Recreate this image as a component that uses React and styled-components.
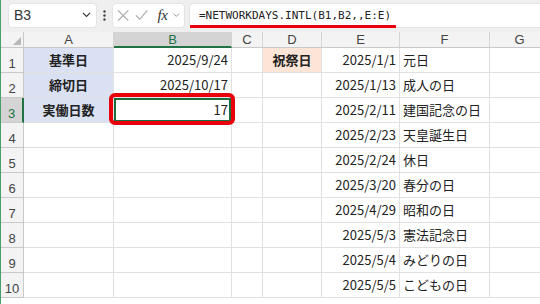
import React from "react";
import styled, { createGlobalStyle, css } from "styled-components";

const GlobalStyle = createGlobalStyle`
  html, body { margin: 0; padding: 0; background: #ffffff; }
  body { font-family: "Noto Sans CJK JP", "Noto Sans", sans-serif; overflow: hidden; }
  * { box-sizing: border-box; }
`;

const Page = styled.div`
  width: 540px;
  height: 304px;
  overflow: hidden;
  border-left: 1px solid #4a9e6b;
  background: #ffffff;
  display: flex;
  flex-direction: column;
`;

const Toolbar = styled.div`
  height: 32px;
  flex: none;
  background: #efefef;
  display: flex;
  align-items: center;
  padding: 0 0 2px 7px;
`;

const Box = styled.div`
  height: 25px;
  background: #ffffff;
  border: 1px solid #e3e3e3;
  border-radius: 4px;
  display: flex;
  align-items: center;
`;

const NameBox = styled(Box)`
  width: 89px;
  padding: 0 5px 0 5px;
  justify-content: space-between;
  font-family: "Liberation Sans", Arial, sans-serif;
  font-size: 14px;
  color: #333;
`;

const Dots = styled.div`
  width: 15px;
  display: flex;
  justify-content: center;
  align-items: center;
`;

const ButtonBox = styled(Box)`
  width: 73px;
  padding: 0 4px 0 4px;
  gap: 6px;
`;

const Fx = styled.span`
  font-family: "Liberation Serif", "Times New Roman", serif;
  font-style: italic;
  font-size: 15px;
  color: #333;
  margin-left: 3px;
  letter-spacing: -0.5px;
`;

const FormulaBox = styled(Box)`
  flex: 1;
  margin-left: 4px;
  border-right: none;
  border-radius: 4px 0 0 4px;
  position: relative;
  padding-left: 9px;
  font-family: "DejaVu Sans Mono", "Liberation Mono", monospace;
  font-size: 11px;
  color: #222;
`;

const Underline = styled.span`
  position: absolute;
  left: 0;
  top: 21px;
  width: 206px;
  height: 3px;
  background: #e8000b;
`;

const Grid = styled.div`
  display: grid;
  grid-template-columns: 23px 90px 118px 31px 59px 78px 90px 60px;
  grid-template-rows: 16px repeat(10, 25px) 10px;
`;

const Corner = styled.div`
  background: #f3f3f3;
  border-right: 1px solid #c9c9c9;
  border-bottom: 1px solid #c9c9c9;
  display: flex;
  align-items: flex-end;
  justify-content: flex-end;
  padding: 0 2px 2px 0;
`;

const ColHeader = styled.div`
  background: ${(p) => (p.$selected ? "#d4d4d4" : "#f3f3f3")};
  color: ${(p) => (p.$selected ? "#217346" : "#444")};
  border-right: 1px solid #d5d5d5;
  border-bottom: ${(p) => (p.$selected ? "2px solid #217346" : "1px solid #c9c9c9")};
  font-family: "Liberation Sans", Arial, sans-serif;
  font-size: 13px;
  line-height: 15px;
  text-align: center;
`;

const RowHeader = styled.div`
  background: ${(p) => (p.$selected ? "#d4d4d4" : "#f3f3f3")};
  color: ${(p) => (p.$selected ? "#217346" : "#444")};
  border-right: ${(p) => (p.$selected ? "2px solid #217346" : "1px solid #c9c9c9")};
  border-bottom: 1px solid #c9c9c9;
  font-family: "Liberation Sans", Arial, sans-serif;
  font-size: 13px;
  display: flex;
  align-items: flex-end;
  justify-content: center;
  padding-bottom: 1px;
`;

const Cell = styled.div`
  border-right: 1px solid #e1e1e1;
  border-bottom: 1px solid #e1e1e1;
  background: ${(p) => p.$bg || "#ffffff"};
  font-size: 13px;
  color: #222;
  font-weight: ${(p) => (p.$bold ? 700 : 400)};
  display: flex;
  align-items: center;
  white-space: nowrap;
  padding: 0 3px 1px 3px;
  justify-content: ${(p) =>
    p.$align === "right" ? "flex-end" : p.$align === "center" ? "center" : "flex-start"};
  ${(p) =>
    p.$active &&
    css`
      position: relative;
      z-index: 2;
      box-shadow: inset 0 0 0 2px #1e6b3f;
      &::after {
        content: "";
        position: absolute;
        top: -5px;
        left: -5px;
        right: -4px;
        bottom: -3px;
        border: 4px solid #e8000b;
        border-radius: 6px;
      }
    `}
`;

const Chevron = ({ color = "#333", size = 9 }) => (
  <svg width={size} height={size * 0.6} viewBox="0 0 10 6">
    <path d="M1 1 L5 5 L9 1" fill="none" stroke={color} strokeWidth="1.3" />
  </svg>
);

const cols = ["A", "B", "C", "D", "E", "F", "G"];

const holidays = [
  ["2025/1/1", "元日"],
  ["2025/1/13", "成人の日"],
  ["2025/2/11", "建国記念の日"],
  ["2025/2/23", "天皇誕生日"],
  ["2025/2/24", "休日"],
  ["2025/3/20", "春分の日"],
  ["2025/4/29", "昭和の日"],
  ["2025/5/3", "憲法記念日"],
  ["2025/5/4", "みどりの日"],
  ["2025/5/5", "こどもの日"],
];

const aCol = ["基準日", "締切日", "実働日数"];
const bCol = ["2025/9/24", "2025/10/17", "17"];

export default function App() {
  const rows = [];
  for (let r = 0; r < 10; r++) {
    rows.push(
      <React.Fragment key={r}>
        <RowHeader $selected={r === 2}>{r + 1}</RowHeader>
        <Cell $align="center" $bold $bg={r < 3 ? "#d9e1f2" : undefined}>
          {aCol[r] || ""}
        </Cell>
        <Cell $align="right" $active={r === 2}>
          {bCol[r] || ""}
        </Cell>
        <Cell />
        <Cell $align="center" $bold $bg={r === 0 ? "#fce4d6" : undefined}>
          {r === 0 ? "祝祭日" : ""}
        </Cell>
        <Cell $align="right">{holidays[r][0]}</Cell>
        <Cell>{holidays[r][1]}</Cell>
        <Cell />
      </React.Fragment>
    );
  }
  return (
    <>
      <GlobalStyle />
      <Page>
        <Toolbar>
          <NameBox>
            <span>B3</span>
            <Chevron />
          </NameBox>
          <Dots>
            <svg width="3" height="11" viewBox="0 0 3 11">
              <circle cx="1.5" cy="1.5" r="1.2" fill="#444" />
              <circle cx="1.5" cy="5.5" r="1.2" fill="#444" />
              <circle cx="1.5" cy="9.5" r="1.2" fill="#444" />
            </svg>
          </Dots>
          <ButtonBox>
            <svg width="13" height="13" viewBox="0 0 13 13">
              <path d="M1 1 L12 12 M12 1 L1 12" stroke="#a8a8a8" strokeWidth="1.2" fill="none" />
            </svg>
            <svg width="14" height="12" viewBox="0 0 14 12">
              <path d="M1 6.5 L5 10.5 L13 1" stroke="#a8a8a8" strokeWidth="1.2" fill="none" />
            </svg>
            <Fx>fx</Fx>
            <Chevron color="#8a8a8a" size={7} />
          </ButtonBox>
          <FormulaBox>
            =NETWORKDAYS.INTL(B1,B2,,E:E)
            <Underline />
          </FormulaBox>
        </Toolbar>
        <Grid>
          <Corner>
            <svg width="8" height="8" viewBox="0 0 8 8">
              <path d="M8 0 L8 8 L0 8 Z" fill="#b8b8b8" />
            </svg>
          </Corner>
          {cols.map((c) => (
            <ColHeader key={c} $selected={c === "B"}>
              {c}
            </ColHeader>
          ))}
          {rows}
        </Grid>
      </Page>
    </>
  );
}
